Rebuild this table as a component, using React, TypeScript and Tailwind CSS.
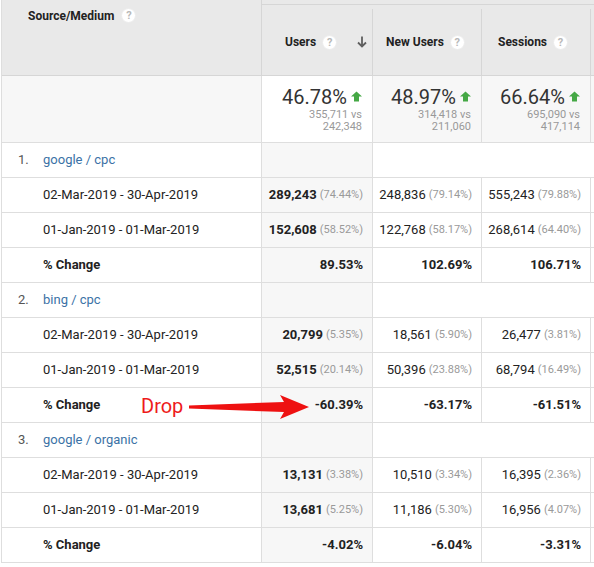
import React from "react";

type Metric = { val: string; pct?: string };

interface Group {
  no: string;
  name: string;
  cur: Metric[];
  prev: Metric[];
  change: string[];
}

const groups: Group[] = [
  {
    no: "1.",
    name: "google / cpc",
    cur: [
      { val: "289,243", pct: "(74.44%)" },
      { val: "248,836", pct: "(79.14%)" },
      { val: "555,243", pct: "(79.88%)" },
    ],
    prev: [
      { val: "152,608", pct: "(58.52%)" },
      { val: "122,768", pct: "(58.17%)" },
      { val: "268,614", pct: "(64.40%)" },
    ],
    change: ["89.53%", "102.69%", "106.71%"],
  },
  {
    no: "2.",
    name: "bing / cpc",
    cur: [
      { val: "20,799", pct: "(5.35%)" },
      { val: "18,561", pct: "(5.90%)" },
      { val: "26,477", pct: "(3.81%)" },
    ],
    prev: [
      { val: "52,515", pct: "(20.14%)" },
      { val: "50,396", pct: "(23.88%)" },
      { val: "68,794", pct: "(16.49%)" },
    ],
    change: ["-60.39%", "-63.17%", "-61.51%"],
  },
  {
    no: "3.",
    name: "google / organic",
    cur: [
      { val: "13,131", pct: "(3.38%)" },
      { val: "10,510", pct: "(3.34%)" },
      { val: "16,395", pct: "(2.36%)" },
    ],
    prev: [
      { val: "13,681", pct: "(5.25%)" },
      { val: "11,186", pct: "(5.30%)" },
      { val: "16,956", pct: "(4.07%)" },
    ],
    change: ["-4.02%", "-6.04%", "-3.31%"],
  },
];

const summary = [
  { pct: "46.78%", a: "355,711 vs", b: "242,348" },
  { pct: "48.97%", a: "314,418 vs", b: "211,060" },
  { pct: "66.64%", a: "695,090 vs", b: "417,114" },
];

const colW = ["w-[111px]", "w-[109px]", "w-[109px]"];

function Help() {
  return (
    <span className="inline-flex items-center justify-center w-[15px] h-[15px] rounded-full bg-white border border-[#ececec] text-[11px] font-bold text-[#b8b8b8] leading-none">
      ?
    </span>
  );
}

function UpArrow() {
  return (
    <svg width="11" height="11" viewBox="0 0 11 11" className="ml-[4px] mb-[1px]">
      <path d="M5.5 0.5 L11 5.5 H8 V10.5 H3 V5.5 H0 Z" fill="#45a845" />
    </svg>
  );
}

function SortDown() {
  return (
    <svg width="10" height="12" viewBox="0 0 10 12">
      <path d="M5 0.5 V10.5 M1 6.5 L5 10.5 L9 6.5" stroke="#5f5f5f" strokeWidth="1.8" fill="none" />
    </svg>
  );
}

function DataRow({ label, cells, bold }: { label: string; cells: Metric[]; bold?: boolean }) {
  return (
    <div className="flex h-[35px] border-b border-[#dedede]">
      <div className={`w-[260px] shrink-0 border-r border-[#dedede] flex items-center pl-[41px] text-[13px] text-[#222] ${bold ? "font-bold" : ""}`}>
        {label}
      </div>
      {cells.map((c, i) => (
        <div
          key={i}
          className={`${colW[i]} shrink-0 border-r border-[#dedede] flex items-center justify-end pr-[9px] text-[13px] text-[#222] ${i === 0 ? "bg-[#f7f7f7]" : ""}`}
        >
          <span className={bold || i === 0 ? "font-bold" : ""}>{c.val}</span>
          {c.pct && <span className="ml-[3px] text-[11px] text-[#9a9a9a]">{c.pct}</span>}
        </div>
      ))}
      <div className="flex-1" />
    </div>
  );
}

export default function App() {
  return (
    <div className="w-[594px] h-[567px] overflow-hidden bg-white font-['Roboto',sans-serif]">
      <div className="relative ml-px border-l border-[#dedede]">
        {/* header */}
        <div className="flex h-[76px] border-b border-[#d6d6d6] bg-[#e9e9e9]">
          <div className="w-[260px] shrink-0 border-r border-[#d6d6d6] pl-[26px] pt-[8px] flex items-start gap-[7px]">
            <span className="text-[12px] leading-[16px] font-bold text-[#222]">Source/Medium</span>
            <Help />
          </div>
          <div className="flex-1 flex flex-col">
            <div className="h-[5px] border-b border-[#d6d6d6]" />
            <div className="flex flex-1 pt-[4px]">
              <div className="w-[111px] shrink-0 border-r border-[#d6d6d6] flex items-center pl-[23px] pr-[5px]">
                <span className="text-[12px] font-bold text-[#222]">Users</span>
                <span className="ml-[6px] flex"><Help /></span>
                <span className="ml-auto flex"><SortDown /></span>
              </div>
              <div className="w-[109px] shrink-0 border-r border-[#d6d6d6] flex items-center pl-[13px]">
                <span className="text-[12px] font-bold text-[#222]">New Users</span>
                <span className="ml-[6px] flex"><Help /></span>
              </div>
              <div className="w-[109px] shrink-0 border-r border-[#d6d6d6] flex items-center pl-[16px]">
                <span className="text-[12px] font-bold text-[#222]">Sessions</span>
                <span className="ml-[6px] flex"><Help /></span>
              </div>
              <div className="flex-1" />
            </div>
          </div>
        </div>

        {/* summary */}
        <div className="flex h-[67px] border-b border-[#dedede]">
          <div className="w-[260px] shrink-0 border-r border-[#dedede] bg-[#f7f7f7]" />
          {summary.map((s, i) => (
            <div
              key={i}
              className={`${colW[i]} shrink-0 border-r border-[#dedede] flex flex-col items-end pr-[10px] pt-[9px] ${i === 0 ? "bg-white" : "bg-[#f7f7f7]"}`}
            >
              <div className="flex items-center">
                <span className="text-[20px] leading-[24px] text-[#333]">{s.pct}</span>
                <UpArrow />
              </div>
              <span className="text-[11px] leading-[12px] text-[#999]">{s.a}</span>
              <span className="text-[11px] leading-[12px] text-[#999]">{s.b}</span>
            </div>
          ))}
          <div className="flex-1 bg-[#f7f7f7]" />
        </div>

        {groups.map((g) => (
          <div key={g.no}>
            <div className="flex h-[35px] border-b border-[#dedede]">
              <div className="w-[260px] shrink-0 border-r border-[#dedede] flex items-center text-[13px]">
                <span className="w-[41px] pl-[16px] text-[#555]">{g.no}</span>
                <span className="text-[#3b72a6]">{g.name}</span>
              </div>
              <div className="w-[111px] shrink-0 border-r border-[#dedede] bg-[#f7f7f7]" />
              <div className="flex-1" />
            </div>
            <DataRow label="02-Mar-2019 - 30-Apr-2019" cells={g.cur} />
            <DataRow label="01-Jan-2019 - 01-Mar-2019" cells={g.prev} />
            <DataRow label="% Change" cells={g.change.map((v) => ({ val: v }))} bold />
          </div>
        ))}

        {/* annotation */}
        <span className="absolute left-[139px] top-[394px] text-[20px] leading-[24px] text-[#ee1b1b]">Drop</span>
        <svg className="absolute left-0 top-0" width="594" height="567" style={{ pointerEvents: "none" }}>
          <polygon
            points="187,405.5 282,402 278,395 307,407 278,419 282,412 187,408.5"
            fill="#ee1111"
          />
        </svg>
      </div>
    </div>
  );
}
